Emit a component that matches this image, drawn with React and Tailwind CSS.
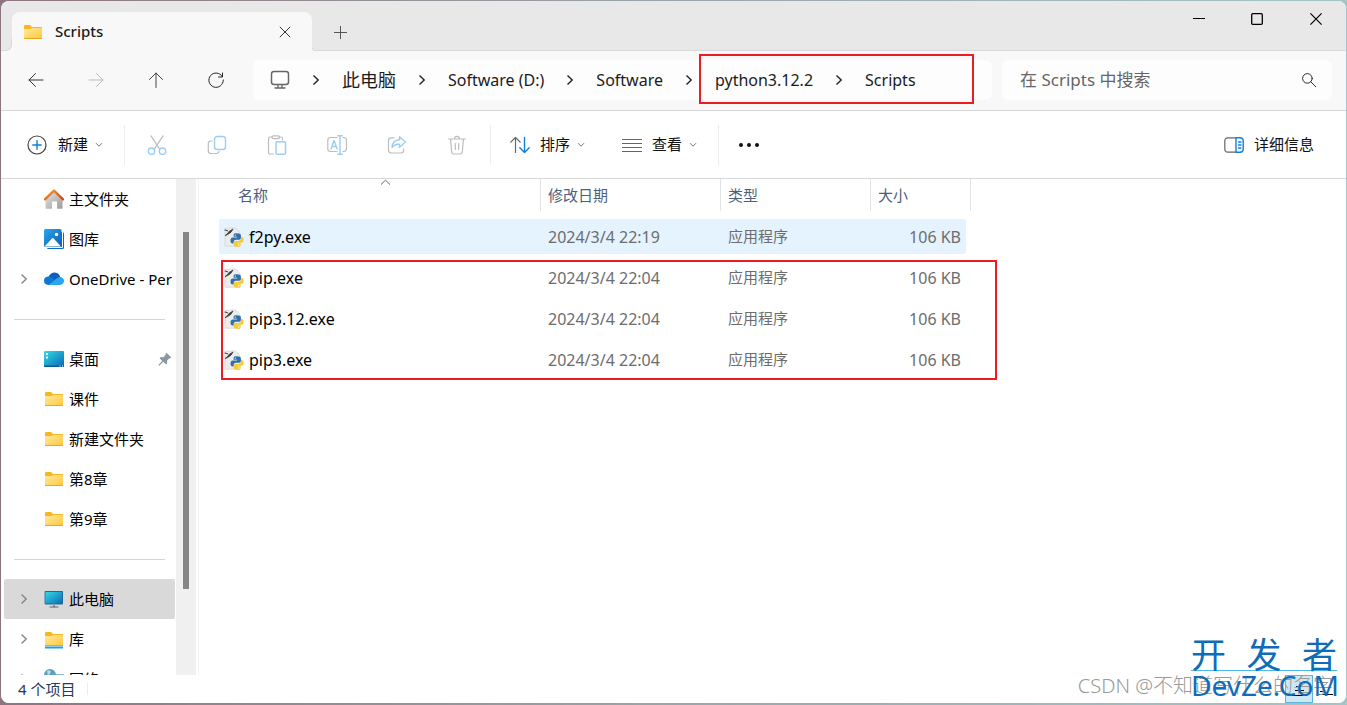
import React, { useState } from 'react';

const files = [
  { name: 'f2py.exe', date: '2024/3/4 22:19', type: '应用程序', size: '106 KB' },
  { name: 'pip.exe', date: '2024/3/4 22:04', type: '应用程序', size: '106 KB' },
  { name: 'pip3.12.exe', date: '2024/3/4 22:04', type: '应用程序', size: '106 KB' },
  { name: 'pip3.exe', date: '2024/3/4 22:04', type: '应用程序', size: '106 KB' },
];

const crumbs = [
  { label: '此电脑', size: 'text-[18px]' },
  { label: 'Software (D:)', size: 'text-[16px]' },
  { label: 'Software', size: 'text-[16px]' },
  { label: 'python3.12.2', size: 'text-[16px]' },
  { label: 'Scripts', size: 'text-[16px]' },
];

const Icon = ({ children, size = 20, className = '' }) => (
  <svg
    width={size}
    height={size}
    viewBox="0 0 20 20"
    fill="none"
    stroke="currentColor"
    strokeWidth="1.2"
    strokeLinecap="round"
    strokeLinejoin="round"
    className={`shrink-0 ${className}`}
    aria-hidden="true"
  >
    {children}
  </svg>
);

const FolderIcon = ({ library = false }) => (
  <Icon>
    <defs>
      <linearGradient id="folder" x1="0" y1="0" x2="1" y2="1">
        <stop offset="0" stopColor="#ffe9a0" />
        <stop offset="1" stopColor="#ffc73a" />
      </linearGradient>
    </defs>
    <path d="M1 4.200Q1 3 2.200 3H7l2 2h9.200q.8 0 .8.800V10H1z" fill="#f9b51c" stroke="none" />
    <path d="M1 7h6.500L9 6h10v10.200q0 .8-.8.800H1.800Q1 17 1 16.200z" fill="url(#folder)" stroke="none" />
    <path d="M1.500 16.500h17" stroke="#e9a520" strokeWidth="1" />
    {library && <path d="M1 18.500h18" stroke="#1a9fe0" strokeWidth="2" strokeLinecap="butt" />}
  </Icon>
);

const HomeIcon = () => (
  <Icon>
    <defs>
      <linearGradient id="homeWall" x1="0" y1="0" x2="1" y2="1">
        <stop offset="0" stopColor="#e4e4e4" />
        <stop offset="1" stopColor="#9c9c9c" />
      </linearGradient>
      <linearGradient id="homeRoof" x1="0" y1="0" x2="1" y2="1">
        <stop offset="0" stopColor="#f79a2a" />
        <stop offset="1" stopColor="#d1431a" />
      </linearGradient>
    </defs>
    <path d="M10 3l8.500 8v8q0 .8-.8.8H13V12.500H8v7.300H2.300q-.8 0-.8-.8v-8z" fill="url(#homeWall)" stroke="none" />
    <path d="M1 10.300L10 1.700l9 8.600" stroke="url(#homeRoof)" strokeWidth="2.400" />
  </Icon>
);

const GalleryIcon = () => (
  <Icon>
    <defs>
      <linearGradient id="gallery" x1="0" y1="0" x2="1" y2="1">
        <stop offset="0" stopColor="#2aa5ea" />
        <stop offset="1" stopColor="#0a5cbc" />
      </linearGradient>
    </defs>
    <rect x="3" y="3" width="17" height="17" rx="1.500" fill="#1567bd" stroke="none" />
    <path d="M3 18.500h15.500V2" stroke="#fff" strokeWidth="1" />
    <rect x="0" y="0" width="17.500" height="18" rx="1.500" fill="url(#gallery)" stroke="none" />
    <path d="M.5 17.500L8 9.500q.8-.8 1.600 0l7.400 8z" fill="#fff" stroke="none" />
    <circle cx="12.500" cy="5.500" r="1.700" fill="#fff" stroke="none" />
  </Icon>
);

const OneDriveIcon = () => (
  <Icon>
    <path d="M4.500 8.500Q6 3.500 11 3.500q4 .3 5.200 4.500L11 13z" fill="#0f5fb8" stroke="none" />
    <path d="M4.500 16Q0 15.600 0 11.800 0 8 4 7.500q2.500-.3 5 1.500l4 4-4 3z" fill="#0f78d4" stroke="none" />
    <path d="M4.500 16L12 10q2-2.500 4.500-2 3.500.8 3.500 4t-4 4z" fill="#2aa6ee" stroke="none" />
  </Icon>
);

const ScreenGradient = () => (
  <defs>
    <linearGradient id="screen" x1="0" y1="0" x2="1" y2="1">
      <stop offset="0" stopColor="#35dbe4" />
      <stop offset="1" stopColor="#0867b8" />
    </linearGradient>
  </defs>
);

const DesktopIcon = () => (
  <Icon>
    <ScreenGradient />
    <rect x="0" y="2" width="20" height="16" rx="1" fill="url(#screen)" stroke="none" />
    <path d="M2 4h2v2H2zM2 7.500h2v2H2z" fill="#fff" stroke="none" />
    <path d="M0 16.500h20v.8q0 .7-.8.700H.8q-.8 0-.8-.7z" fill="#0d5a91" stroke="none" />
    <path d="M15.500 17h1M18 17h1" stroke="#fff" strokeWidth="1" strokeLinecap="butt" />
  </Icon>
);

const ComputerIcon = () => (
  <Icon>
    <ScreenGradient />
    <rect x="1.500" y="2.500" width="17" height="12.500" fill="url(#screen)" stroke="#1c6a9c" strokeWidth="1" />
    <path d="M10 15.500v2" stroke="#8c9aa3" strokeWidth="2" />
    <path d="M6 18h8" stroke="#59666e" strokeWidth="1" />
  </Icon>
);

const NetworkIcon = () => (
  <Icon>
    <ScreenGradient />
    <rect x="4" y="6" width="16" height="11" fill="url(#screen)" stroke="#1c6a9c" strokeWidth="1" />
    <circle cx="6" cy="6" r="6" fill="#5d9fbf" stroke="none" />
    <path d="M3 2q3-2 4 1L4 7z" fill="#b7dcea" stroke="none" />
  </Icon>
);

const PythonExeIcon = () => (
  <Icon>
    <path d="M1 1.500L10 .8q4.500 1.200 6 5.700v12.700H1z" fill="#ececec" stroke="#cfcfcf" strokeWidth=".7" strokeDasharray="1.500 1" />
    <path d="M3.500 7L5 4.500 9 2 7 5.200 4.500 7z" fill="#3f3f3f" stroke="#3f3f3f" strokeWidth=".8" />
    <path d="M1 3l2.500.8M1.500 8.500l2.500-2" stroke="#4b4b4b" />
    <path
      d="M12.800 6.300c-3.200 0-3.200 1-3.200 2.100v1.400h3.500v.6H8.700c-1.600 0-2.200 1.500-2.200 3.200s.6 3 2.200 3h1v-1.700c0-1.200 1-2.100 2.200-2.100h3.300c.9 0 1.700-.7 1.700-1.700V8.500c0-1.500-1.300-2.200-4.100-2.200z"
      fill="#2f70aa"
      stroke="none"
    />
    <path
      d="M13.300 19.800c3.200 0 3.200-1 3.200-2.100V16.300H13v-.6h4.600c1.600 0 2-1.300 2-2.900s-.5-2.700-2-2.700h-.7v1.700c0 1.300-1 2.200-2.200 2.200h-3.300c-.9 0-1.700.7-1.700 1.700v1.900c0 1.500 1.200 2.200 3.600 2.200z"
      fill="#fbc92c"
      stroke="none"
    />
    <circle cx="11.300" cy="8.100" r=".7" fill="#fff" stroke="none" />
    <circle cx="14.800" cy="18" r=".7" fill="#fff" stroke="none" />
  </Icon>
);

const PinIcon = () => (
  <svg width="14" height="14" viewBox="0 0 14 14" className="shrink-0" aria-hidden="true">
    <path d="M8.500.8l4.700 4.600-1 1-.8-.2-2.400 2.500.1 2.600-1.100 1.100-2.700-2.600L1.300 13.700.4 12.900l3.800-4L1.600 6.200l1.100-1.100 2.600.1 2.500-2.500-.3-.9z" fill="#8b98a2" />
  </svg>
);

const ChevronRight = ({ className = '' }) => (
  <svg
    width="8"
    height="12"
    viewBox="0 0 8 12"
    fill="none"
    stroke="currentColor"
    strokeWidth="1.400"
    className={`shrink-0 ${className}`}
    aria-hidden="true"
  >
    <path d="M1.500 1.500L6.200 6 1.500 10.500" />
  </svg>
);

const CaretDown = () => (
  <svg width="8" height="6" viewBox="0 0 8 6" fill="none" stroke="#777" aria-hidden="true">
    <path d="M1 1.200L4 4.200 7 1.200" />
  </svg>
);

const sidebarTop = [
  { label: '主文件夹', icon: <HomeIcon /> },
  { label: '图库', icon: <GalleryIcon /> },
  { label: 'OneDrive - Per', icon: <OneDriveIcon />, expandable: true },
];

const sidebarQuick = [
  { label: '桌面', icon: <DesktopIcon />, pinned: true },
  { label: '课件', icon: <FolderIcon /> },
  { label: '新建文件夹', icon: <FolderIcon /> },
  { label: '第8章', icon: <FolderIcon /> },
  { label: '第9章', icon: <FolderIcon /> },
];

const sidebarDevices = [
  { label: '此电脑', icon: <ComputerIcon />, expandable: true },
  { label: '库', icon: <FolderIcon library />, expandable: true },
  { label: '网络', icon: <NetworkIcon />, expandable: true },
];

const SidebarGroup = ({ items, selected, onSelect }) => (
  <ul>
    {items.map((item) => (
      <li key={item.label}>
        <button
          type="button"
          onClick={() => onSelect(item.label)}
          className={`flex h-10 w-full items-center overflow-hidden rounded-xs pl-4 text-left text-[15px] whitespace-nowrap text-black ${
            selected === item.label ? 'bg-[#d9d9d9]' : ''
          }`}
        >
          <span className="flex w-6 shrink-0 text-[#858585]">{item.expandable && <ChevronRight />}</span>
          {item.icon}
          <span className="ml-[5px] flex-1">{item.label}</span>
          {item.pinned && <span className="mr-[3px]"><PinIcon /></span>}
        </button>
      </li>
    ))}
  </ul>
);

const SidebarDivider = () => (
  <div className="flex h-10 items-center pr-[10px] pl-[10px]">
    <div className="h-px w-full bg-[#d4d4d4]"></div>
  </div>
);

const TitleBar = () => (
  <header className="flex h-[50px] shrink-0 bg-[#e8e8e8]">
    <div className="mt-[38px] w-[11px] bg-[#f8f8f8]">
      <div className="h-full rounded-br-md border-r border-b border-[#d9d9d9] bg-[#e8e8e8]"></div>
    </div>
    <div className="mt-[11px] flex w-[300px] items-center rounded-t-lg bg-[#f8f8f8] pr-[11px] pl-[11px]">
      <FolderIcon />
      <span className="ml-3 flex-1 text-[15px] font-medium text-[#1b1b1b]">Scripts</span>
      <button type="button" aria-label="关闭标签页" className="flex h-8 w-8 items-center justify-center">
        <svg width="12" height="12" viewBox="0 0 12 12" stroke="#333" aria-hidden="true">
          <path d="M.8.8l10.400 10.400M11.200.8L.8 11.200" />
        </svg>
      </button>
    </div>
    <div className="flex flex-1 flex-col">
      <div className="flex flex-1 items-start justify-between">
        <button type="button" aria-label="新建标签页" className="mt-[15px] ml-3 flex h-8 w-8 items-center justify-center">
          <svg width="13" height="13" viewBox="0 0 13 13" stroke="#555" aria-hidden="true">
            <path d="M6.500 0v13M0 6.500h13" />
          </svg>
        </button>
        <div className="flex">
          <button type="button" aria-label="最小化" className="flex h-9 w-[58px] items-center justify-center">
            <svg width="12" height="12" viewBox="0 0 12 12" stroke="#000" aria-hidden="true">
              <path d="M0 5.500h12" />
            </svg>
          </button>
          <button type="button" aria-label="最大化" className="flex h-9 w-[58px] items-center justify-center">
            <svg width="12" height="12" viewBox="0 0 12 12" fill="none" stroke="#000" strokeWidth="1.300" aria-hidden="true">
              <rect x=".7" y=".7" width="10.600" height="10.600" rx="1" />
            </svg>
          </button>
          <button type="button" aria-label="关闭" className="flex h-9 w-[60px] items-center justify-center">
            <svg width="12" height="12" viewBox="0 0 12 12" stroke="#000" strokeWidth="1.200" aria-hidden="true">
              <path d="M.4.400l11.200 11.200M11.600.4L.4 11.600" />
            </svg>
          </button>
        </div>
      </div>
      <div className="h-3 bg-[#f8f8f8]">
        <div className="h-full rounded-bl-md border-b border-l border-[#d9d9d9] bg-[#e8e8e8]"></div>
      </div>
    </div>
  </header>
);

const NavBar = () => (
  <nav className="flex h-[60px] shrink-0 items-center border-b border-[#d6d6d6] bg-[#f8f8f8] pr-[14px] pb-px pl-[5px]">
    <button type="button" aria-label="后退" className="flex h-10 w-[60px] items-center justify-center text-[#333]">
      <Icon><path d="M17 10H3M9.500 3.500L3 10l6.500 6.500" strokeWidth="1" /></Icon>
    </button>
    <button type="button" aria-label="前进" className="flex h-10 w-[60px] items-center justify-center text-[#bbb]">
      <Icon><path d="M3 10h14M10.500 3.500L17 10l-6.500 6.500" strokeWidth="1" /></Icon>
    </button>
    <button type="button" aria-label="上一级" className="flex h-10 w-[60px] items-center justify-center text-[#444]">
      <Icon><path d="M10 17.500V3M3.500 9.500L10 3l6.500 6.500" strokeWidth="1" /></Icon>
    </button>
    <button type="button" aria-label="刷新" className="flex h-10 w-[60px] items-center justify-center text-[#222]">
      <Icon><path d="M16.300 6.500A7.200 7.200 0 1 0 17.300 10M16.500 3v4H12.500" strokeWidth="1" /></Icon>
    </button>
    <div className="relative ml-[7px] flex h-10 flex-1 items-center rounded-md bg-[#fdfdfd] pl-[17px]">
      <Icon className="text-[#666]">
        <rect x="1.500" y="1.500" width="17" height="13" rx="2.500" strokeWidth="1.500" />
        <path d="M8 15v3M12 15v3M5 18h10" strokeWidth="1.300" />
      </Icon>
      {crumbs.map((crumb) => (
        <React.Fragment key={crumb.label}>
          <ChevronRight className="mx-[22px] text-[#222]" />
          <a href="#" className={`whitespace-nowrap text-[#1b1b1b] ${crumb.size}`}>{crumb.label}</a>
        </React.Fragment>
      ))}
      <div className="pointer-events-none absolute -top-[6px] right-[18px] h-[50px] w-[275px] border-2 border-[#ed1c24]"></div>
    </div>
    <div className="ml-[10px] flex h-10 w-[330px] items-center rounded-md bg-[#fdfdfd] pr-[15px] pl-[18px]">
      <input
        type="text"
        aria-label="在 Scripts 中搜索"
        placeholder="在 Scripts 中搜索"
        className="min-w-0 flex-1 bg-transparent text-[17px] outline-none placeholder:text-[#666]"
      />
      <Icon size={16} className="text-[#222]">
        <circle cx="8" cy="8" r="6" />
        <path d="M12.500 12.500l6 6" />
      </Icon>
    </div>
  </nav>
);

const ToolButton = ({ label, children }) => (
  <button type="button" aria-label={label} disabled className="flex h-10 w-[60px] items-center justify-center text-[#bdbdbd]">
    {children}
  </button>
);

const ToolDivider = () => <div className="h-10 w-px bg-[#ededed]"></div>;

const Toolbar = () => (
  <div className="flex h-[68px] shrink-0 items-center border-b border-[#d6d6d6] bg-white text-[15px] text-[#111]">
    <button type="button" className="flex h-10 w-[123px] items-center pl-[26px]">
      <Icon className="text-[#444]">
        <circle cx="10" cy="10" r="9" />
        <path d="M10 5.800v8.400M5.800 10h8.400" stroke="#0f7fdb" strokeWidth="1.400" />
      </Icon>
      <span className="mr-[7px] ml-[11px]">新建</span>
      <CaretDown />
    </button>
    <ToolDivider />
    <div className="mr-[3px] ml-[2px] flex">
      <ToolButton label="剪切">
        <Icon>
          <path d="M4 .8l8.500 13M16 .8l-8.500 13" />
          <circle cx="4.500" cy="16.200" r="3.200" stroke="#9bcdf3" strokeWidth="1.400" />
          <circle cx="15.500" cy="16.200" r="3.200" stroke="#9bcdf3" strokeWidth="1.400" />
        </Icon>
      </ToolButton>
      <ToolButton label="复制">
        <Icon>
          <path d="M5 6H4Q1.300 6 1.300 8.700v7Q1.300 18.500 4 18.500h5.500q2 0 2.500-2" />
          <rect x="7.500" y="1.500" width="11" height="13" rx="2.800" stroke="#9bcdf3" strokeWidth="1.400" />
        </Icon>
      </ToolButton>
      <ToolButton label="粘贴">
        <Icon>
          <path d="M5 2H3Q1.500 2 1.500 3.500v14Q1.500 19 3 19h3.500M12 2h2q1.500 0 1.500 1.500V5" />
          <rect x="5" y=".8" width="7.500" height="2.800" rx="1.400" />
          <rect x="9" y="6.700" width="9.500" height="12.500" rx="1.300" stroke="#9bcdf3" strokeWidth="1.500" />
        </Icon>
      </ToolButton>
      <ToolButton label="重命名">
        <Icon>
          <path d="M10 2.500H3.500q-2.700 0-2.700 2.700v8.600q0 2.700 2.700 2.700H10M16 2.500h.8q2.700 0 2.700 2.700v8.600q0 2.700-2.700 2.700H16" />
          <path d="M4 14l3-8.500L10.200 14M5 11.500h4M13 .8v18.400M10.800.8h4.400M10.800 19.200h4.400" stroke="#9bcdf3" strokeWidth="1.400" />
        </Icon>
      </ToolButton>
      <ToolButton label="共享">
        <Icon>
          <path d="M7 2.800H4.300Q1.500 2.800 1.500 5.500v9.800Q1.500 18 4.300 18H14q2.700 0 2.700-2.700V14" />
          <path d="M12.500 1.800l6 5.200-6 5.200V9.300q-5-.5-7.500 3.200.5-7.500 7.500-7.800z" stroke="#9bcdf3" strokeWidth="1.400" />
        </Icon>
      </ToolButton>
      <ToolButton label="删除">
        <Icon>
          <path d="M1.500 4h17M3.500 4l1.200 13q.2 2 2 2h6.600q1.800 0 2-2L16.500 4M7.500 3.800Q7.500 1.300 10 1.300t2.500 2.500M8.300 8.500v6M11.700 8.500v6" />
        </Icon>
      </ToolButton>
    </div>
    <ToolDivider />
    <button type="button" className="flex h-10 items-center pl-[19px]">
      <Icon>
        <path d="M5.500 17.500V2.500M.8 7.200L5.500 2.500l4.700 4.700" stroke="#666" />
        <path d="M14.500 2.500v15M9.800 12.800l4.700 4.700 4.700-4.700" stroke="#0f7fdb" strokeWidth="1.400" />
      </Icon>
      <span className="mr-[7px] ml-[10px]">排序</span>
      <CaretDown />
    </button>
    <button type="button" className="flex h-10 items-center pl-[37px]">
      <Icon className="text-[#666]">
        <path d="M0 4.500h20M0 8.500h20M0 12.500h20M0 16.500h20" strokeLinecap="butt" />
      </Icon>
      <span className="mr-[7px] ml-[10px]">查看</span>
      <CaretDown />
    </button>
    <div className="ml-[21px]"><ToolDivider /></div>
    <button type="button" aria-label="查看更多" className="flex h-10 w-[60px] items-center justify-center">
      <Icon>
        <path d="M2 10h.01M10 10h.01M18 10h.01" strokeWidth="4" />
      </Icon>
    </button>
    <button type="button" className="mr-8 ml-auto flex h-10 items-center">
      <Icon>
        <path d="M12 2.800H4Q.8 2.800.8 6v8q0 3.200 3.200 3.200h8" stroke="#666" />
        <path d="M12 2.800h4q3.200 0 3.200 3.200v8q0 3.200-3.200 3.200h-4zM14.500 7h2.500M14.500 10h2.500M14.500 13h2.500" stroke="#0f7fdb" strokeWidth="1.400" />
      </Icon>
      <span className="ml-[10px]">详细信息</span>
    </button>
  </div>
);

const HeaderCell = ({ children, className = '', pad = 'pl-[7px]' }) => (
  <th className={`relative p-0 text-left align-top font-normal ${className}`}>
    <div className={`flex h-8 items-center border-r border-[#e3e3e3] ${pad}`}>{children}</div>
  </th>
);

const FileTable = () => {
  const [active, setActive] = useState('f2py.exe');
  return (
    <div className="relative ml-5 self-start">
      <table className="w-[752px] table-fixed border-separate border-spacing-0 text-[15px]">
        <thead className="text-[#4c5f7d]">
          <tr className="h-[37px]">
            <HeaderCell className="w-[322px]" pad="pl-[19px]">
              名称
              <svg
                width="12"
                height="7"
                viewBox="0 0 12 7"
                fill="none"
                stroke="#666"
                className="absolute top-0 left-1/2"
                aria-hidden="true"
              >
                <path d="M1 5.500L5.500 1.200 10 5.500" />
              </svg>
            </HeaderCell>
            <HeaderCell className="w-[180px]">修改日期</HeaderCell>
            <HeaderCell className="w-[150px]">类型</HeaderCell>
            <HeaderCell className="w-[100px]">大小</HeaderCell>
          </tr>
        </thead>
        <tbody className="text-[#6d6d6d]">
          {files.map((file) => {
            const bg = active === file.name ? 'bg-[#e5f3ff]' : '';
            return (
              <tr key={file.name} className="h-[41px]" onClick={() => setActive(file.name)}>
                <td className="p-0">
                  <div className={`flex h-[35px] items-center rounded-l-xs pl-[5px] text-[16px] text-black ${bg}`}>
                    <PythonExeIcon />
                    <span className="ml-[5px]">{file.name}</span>
                  </div>
                </td>
                <td className="p-0">
                  <div className={`flex h-[35px] items-center pl-[7px] text-[16px] ${bg}`}>{file.date}</div>
                </td>
                <td className="p-0">
                  <div className={`flex h-[35px] items-center pl-[7px] ${bg}`}>{file.type}</div>
                </td>
                <td className="p-0">
                  <div className={`mr-[5px] flex h-[35px] items-center justify-end rounded-r-xs pr-[5px] text-[16px] ${bg}`}>
                    {file.size}
                  </div>
                </td>
              </tr>
            );
          })}
        </tbody>
      </table>
      <div className="pointer-events-none absolute top-[81px] left-[2px] h-[120px] w-[776px] border-2 border-[#ed1c24]"></div>
    </div>
  );
};

const Watermark = () => (
  <>
    <div className="pointer-events-none absolute right-[13px] bottom-[5px] text-[20px] leading-6 font-light whitespace-nowrap text-[#999]">
      CSDN @不知道写什么的名字
    </div>
    <div className="pointer-events-none absolute right-[9px] bottom-[4px] w-[146px] text-[#0f6cb8]">
      <div className="flex justify-between text-[35px] leading-[30px]">
        <span>开</span>
        <span>发</span>
        <span>者</span>
      </div>
      <div className="h-px bg-[#4fb9ea]"></div>
      <div className="text-[28px] leading-[28px]">DevZe.CoM</div>
    </div>
  </>
);

const StatusBar = () => (
  <footer className="flex h-7 shrink-0 items-center bg-white pl-[17px] text-[15px] text-[#24395c]">
    <span>4 个项目</span>
    <div className="ml-3 h-3 w-px bg-[#ececec]"></div>
    <div className="mr-2 ml-auto flex h-7 gap-px">
      <button type="button" aria-label="详细信息视图" className="flex h-7 w-7 items-center justify-center border border-[#5fb4d8] bg-[#cde8f5]">
        <svg width="16" height="16" viewBox="0 0 16 16" stroke="#000" aria-hidden="true">
          <path d="M5 5.500h6M4 9.500h9M1 14.500h14" />
        </svg>
      </button>
      <button type="button" aria-label="大图标视图" className="flex h-7 w-6 items-center justify-center">
        <svg width="16" height="16" viewBox="0 0 16 16" fill="none" stroke="#000" aria-hidden="true">
          <path d="M2 10.500h4M1 13.500h14" />
        </svg>
      </button>
    </div>
  </footer>
);

export default function App() {
  const [selected, setSelected] = useState('此电脑');

  return (
    <div className="h-screen bg-linear-to-r from-[#8d7480] via-[#9aa6ab] to-[#a5c4c8] px-px pt-px pb-[2px] font-['Noto_Sans','Noto_Sans_CJK_SC',sans-serif]">
      <div className="relative flex h-full flex-col overflow-hidden rounded-lg bg-white">
        <TitleBar />
        <NavBar />
        <Toolbar />
        <main className="flex min-h-0 flex-1">
          <aside className="w-[175px] shrink-0 overflow-hidden pr-px pl-[3px]">
            <SidebarGroup items={sidebarTop} selected={selected} onSelect={setSelected} />
            <SidebarDivider />
            <SidebarGroup items={sidebarQuick} selected={selected} onSelect={setSelected} />
            <SidebarDivider />
            <SidebarGroup items={sidebarDevices} selected={selected} onSelect={setSelected} />
          </aside>
          <div className="w-5 shrink-0 bg-[#f0f0f0] pt-[53px]">
            <div className="mx-auto h-[357px] w-[6px] bg-[#868686]"></div>
          </div>
          <div className="ml-[2px] flex flex-1 border-l border-[#f3f3f3]">
            <FileTable />
          </div>
        </main>
        <StatusBar />
        <Watermark />
      </div>
    </div>
  );
}
